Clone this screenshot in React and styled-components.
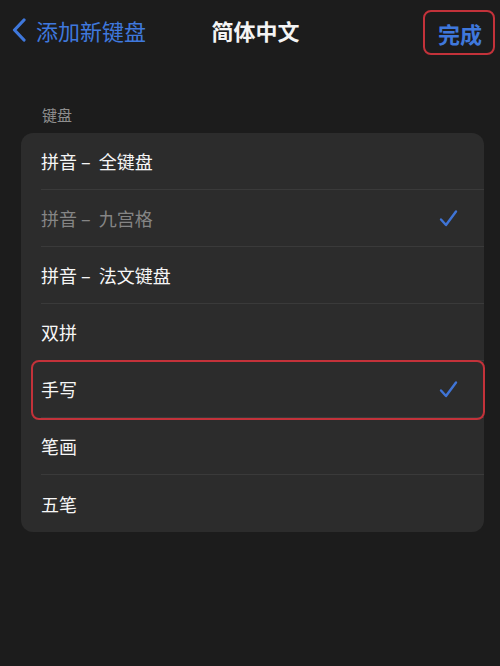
import React from "react";
import styled, { createGlobalStyle } from "styled-components";

const GlobalStyle = createGlobalStyle`
  html, body {
    margin: 0;
    padding: 0;
    background: #1c1c1c;
  }
  body {
    font-family: "Noto Sans CJK SC", "Noto Sans", sans-serif;
  }
`;

const Screen = styled.div`
  width: 500px;
  height: 666px;
  background: #1c1c1c;
  overflow: hidden;
`;

const NavBar = styled.div`
  height: 68px;
  box-sizing: border-box;
  display: grid;
  grid-template-columns: 1fr auto 1fr;
  align-items: center;
  padding: 0 5px 8px 12px;
`;

const BackLink = styled.div`
  display: flex;
  align-items: center;
  gap: 10px;
  color: #3f78dc;
  font-size: 22px;
  line-height: 1;
`;

const Title = styled.div`
  color: #f4f4f4;
  font-size: 22px;
  font-weight: 700;
  margin-left: 4px;
`;

const DoneButton = styled.div`
  justify-self: end;
  color: #3f78dc;
  font-size: 22px;
  font-weight: 700;
  height: 45px;
  box-sizing: border-box;
  padding: 0 11px 0 13px;
  display: flex;
  align-items: center;
  border: 2px solid #c3323a;
  border-radius: 8px;
  margin-top: 5px;
`;

const Section = styled.div`
  padding: 0 16px 0 21px;
`;

const SectionLabel = styled.div`
  margin: 37px 0 8px 42px;
  height: 20px;
  line-height: 20px;
  font-size: 15px;
  color: #8e8e8e;
`;

const Card = styled.div`
  background: #2c2c2c;
  border-radius: 12px;
`;

const Row = styled.div`
  position: relative;
  padding-left: 20px;
  height: 57px;

  ${(p) =>
    p.highlighted &&
    `
    &::after {
      content: "";
      position: absolute;
      left: 10px;
      right: -1px;
      top: -1px;
      bottom: -2px;
      border: 2px solid #c3323a;
      border-radius: 8px;
      pointer-events: none;
    }
  `}
`;

const RowInner = styled.div`
  height: 100%;
  box-sizing: border-box;
  display: flex;
  align-items: center;
  justify-content: space-between;
  padding-right: 26px;
  border-bottom: ${(p) => (p.last ? "none" : "1px solid #3a3a3a")};
`;

const RowText = styled.span`
  font-size: 18px;
  color: ${(p) => (p.dim ? "#858585" : "#f6f6f6")};
  white-space: pre;
`;

const Chevron = () => (
  <svg width="14" height="24" viewBox="0 0 14 24">
    <path
      d="M12 2 L2.5 12 L12 22"
      fill="none"
      stroke="#3f78dc"
      strokeWidth="3.2"
      strokeLinecap="round"
      strokeLinejoin="round"
    />
  </svg>
);

const Check = () => (
  <svg width="19" height="19" viewBox="0 0 19 19">
    <path
      d="M2 10.5 L7 16 L17 2.5"
      fill="none"
      stroke="#3f74d6"
      strokeWidth="2.4"
      strokeLinecap="round"
      strokeLinejoin="round"
    />
  </svg>
);

const items = [
  { label: "拼音 –  全键盘" },
  { label: "拼音 –  九宫格", dim: true, checked: true },
  { label: "拼音 –  法文键盘" },
  { label: "双拼" },
  { label: "手写", checked: true, highlighted: true },
  { label: "笔画" },
  { label: "五笔" },
];

export default function App() {
  return (
    <Screen>
      <GlobalStyle />
      <NavBar>
        <BackLink>
          <Chevron />
          <span>添加新键盘</span>
        </BackLink>
        <Title>简体中文</Title>
        <DoneButton>完成</DoneButton>
      </NavBar>
      <SectionLabel>键盘</SectionLabel>
      <Section>
        <Card>
          {items.map((item, i) => (
            <Row key={item.label} highlighted={item.highlighted}>
              <RowInner last={i === items.length - 1}>
                <RowText dim={item.dim}>{item.label}</RowText>
                {item.checked && <Check />}
              </RowInner>
            </Row>
          ))}
        </Card>
      </Section>
    </Screen>
  );
}
